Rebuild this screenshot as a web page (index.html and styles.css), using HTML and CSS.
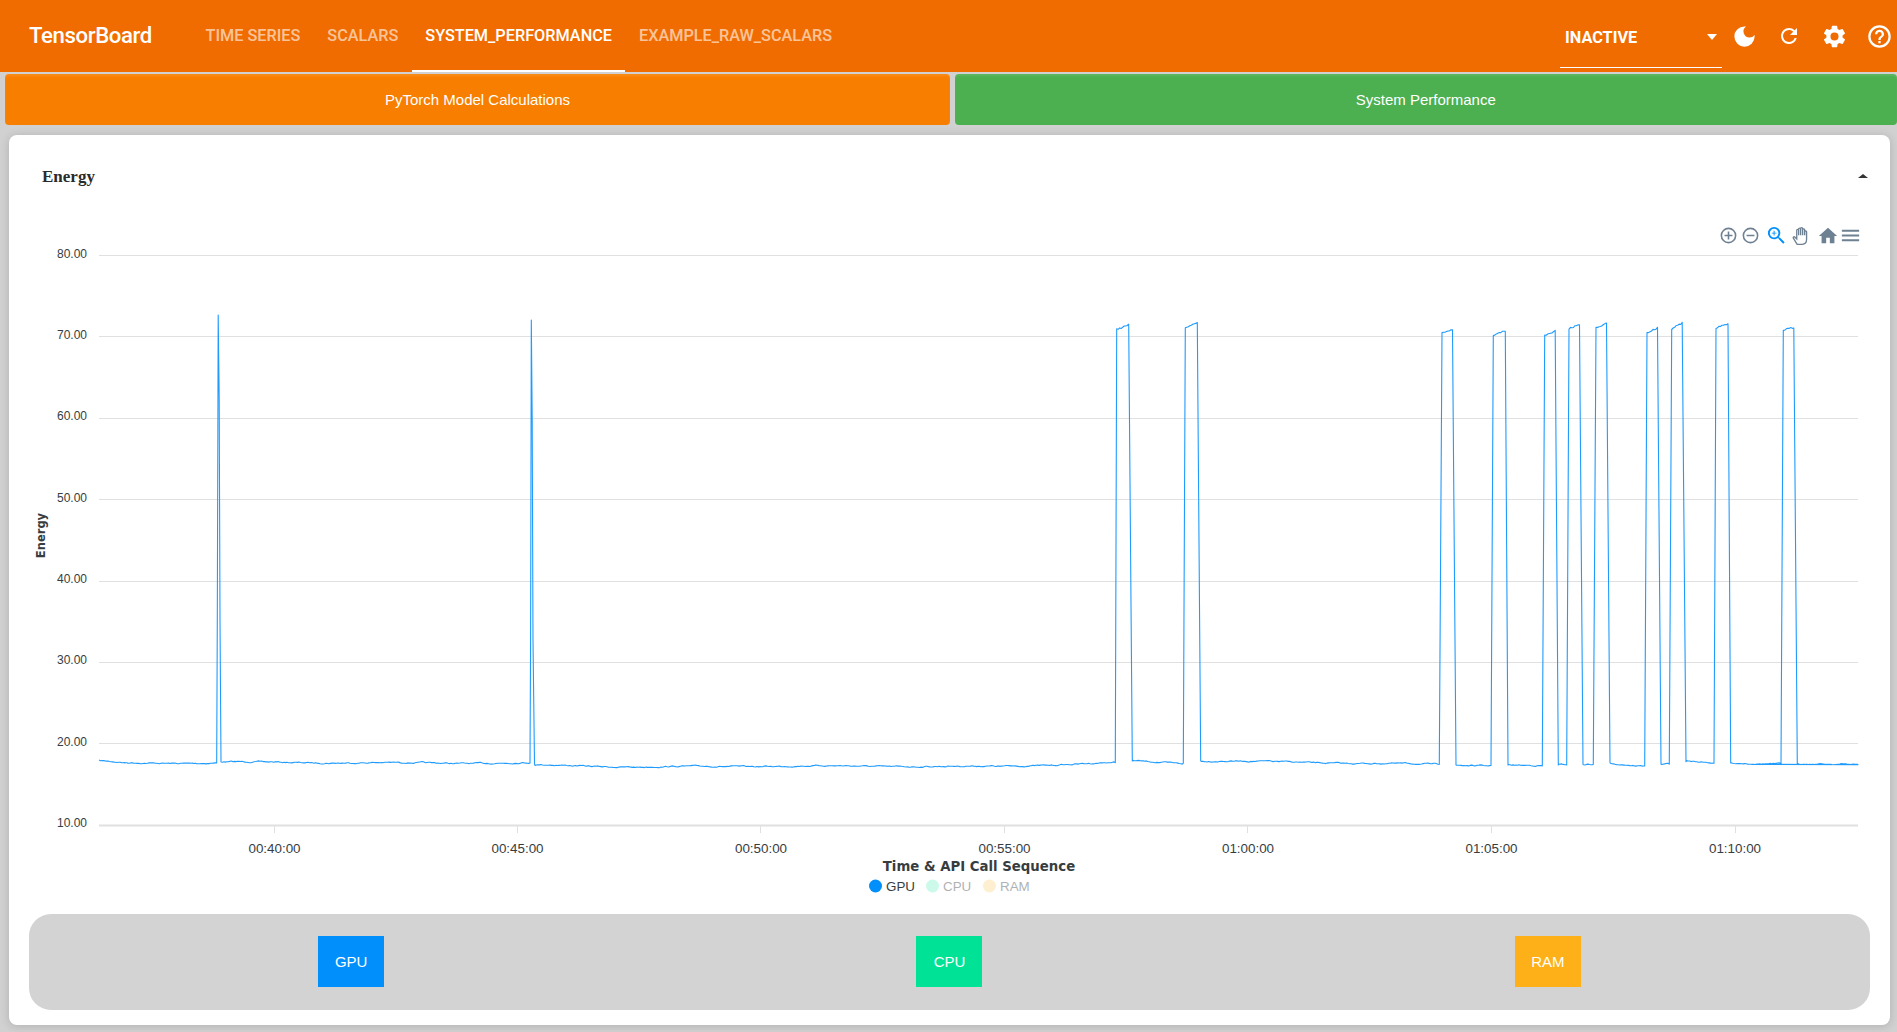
FILE: index.html
```html
<!DOCTYPE html>
<html>
<head>
  <meta charset="utf-8" />
  <title>TensorBoard</title>
  <link rel="stylesheet" href="styles.css">
</head>
<body>
  <header class="topbar">
    <div class="brand">TensorBoard</div>
    <nav class="tabs">
      <a class="tab">Time Series</a>
      <a class="tab">Scalars</a>
      <a class="tab tab-active">System_Performance</a>
      <a class="tab">Example_Raw_Scalars</a>
    </nav>
    <div class="topbar-right">
      <div class="plugin-select">
        <span>Inactive</span>
        <i class="select-arrow"></i>
      </div>
      <button class="icon-btn" aria-label="dark mode">
        <svg viewBox="0 0 24 24" width="27" height="27"><path d="M12 3a9 9 0 1 0 9 9c0-.46-.04-.92-.1-1.36a5.39 5.39 0 0 1-4.4 2.26 5.4 5.4 0 0 1-3.14-9.8c-.44-.06-.9-.1-1.36-.1z"/></svg>
      </button>
      <button class="icon-btn" aria-label="reload">
        <svg viewBox="0 0 24 24" width="24" height="24"><path d="M17.65 6.35A7.96 7.96 0 0 0 12 4a8 8 0 1 0 7.73 10h-2.08A6 6 0 1 1 12 6c1.66 0 3.14.69 4.22 1.78L13 11h7V4l-2.35 2.35z"/></svg>
      </button>
      <button class="icon-btn" aria-label="settings">
        <svg viewBox="0 0 24 24" width="27" height="27"><path d="M19.14 12.94c.04-.3.06-.61.06-.94s-.02-.64-.07-.94l2.03-1.58a.49.49 0 0 0 .12-.61l-1.92-3.32a.49.49 0 0 0-.59-.22l-2.39.96a7 7 0 0 0-1.62-.94l-.36-2.54a.48.48 0 0 0-.48-.41h-3.84a.48.48 0 0 0-.47.41l-.36 2.54c-.59.24-1.13.57-1.62.94l-2.39-.96a.49.49 0 0 0-.59.22L2.73 8.87a.48.48 0 0 0 .12.61l2.03 1.58c-.05.3-.08.63-.08.94s.02.64.07.94l-2.03 1.58a.49.49 0 0 0-.12.61l1.92 3.32c.12.22.37.29.59.22l2.39-.96c.5.38 1.03.7 1.62.94l.36 2.54c.05.24.24.41.48.41h3.84c.24 0 .44-.17.47-.41l.36-2.54c.59-.24 1.13-.56 1.62-.94l2.39.96c.22.08.47 0 .59-.22l1.92-3.32a.48.48 0 0 0-.12-.61l-2.01-1.58zM12 15.6A3.6 3.6 0 1 1 12 8.4a3.6 3.6 0 0 1 0 7.2z"/></svg>
      </button>
      <button class="icon-btn" aria-label="help">
        <svg viewBox="0 0 24 24" width="27" height="27"><path d="M11 18h2v-2h-2v2zm1-16a10 10 0 1 0 0 20 10 10 0 0 0 0-20zm0 18a8 8 0 1 1 0-16 8 8 0 0 1 0 16zm0-14a4 4 0 0 0-4 4h2a2 2 0 1 1 4 0c0 2-3 1.75-3 5h2c0-2.25 3-2.5 3-5a4 4 0 0 0-4-4z"/></svg>
      </button>
    </div>
  </header>

  <div class="section-btns">
    <button class="section-btn section-orange">PyTorch Model Calculations</button>
    <button class="section-btn section-green">System Performance</button>
  </div>

  <main class="card">
    <div class="card-head">
      <h2 class="card-title">Energy</h2>
      <i class="collapse-arrow"></i>
    </div>

    <div class="chart">
      <div class="chart-toolbar">
        <svg class="tool" width="19" height="19" viewBox="0 0 24 24"><path d="M13 7h-2v4H7v2h4v4h2v-4h4v-2h-4V7zm-1-5a10 10 0 1 0 0 20 10 10 0 0 0 0-20zm0 18a8 8 0 1 1 0-16 8 8 0 0 1 0 16z"/></svg>
        <svg class="tool tool-minus" width="19" height="19" viewBox="0 0 24 24"><path d="M7 11v2h10v-2H7zm5-9a10 10 0 1 0 0 20 10 10 0 0 0 0-20zm0 18a8 8 0 1 1 0-16 8 8 0 0 1 0 16z"/></svg>
        <svg class="tool tool-on" width="23" height="23" viewBox="0 0 24 24"><path d="M15.5 14h-.79l-.28-.27A6.47 6.47 0 0 0 16 9.5 6.5 6.5 0 1 0 9.5 16c1.61 0 3.09-.59 4.23-1.57l.27.28v.79l5 4.99L20.49 19l-4.99-5zm-6 0a4.5 4.5 0 1 1 0-9 4.5 4.5 0 0 1 0 9z"/><path d="M12 10h-2v2H9v-2H7V9h2V7h1v2h2v1z"/></svg>
        <svg class="tool tool-hand" width="20" height="20" viewBox="0 0 24 24"><path d="M6.2 22 1.6 14.6c-.7-1.1.7-2.2 1.7-1.3l2.4 2.2V5.2c0-1.5 2.3-1.5 2.3 0V11 3.7c0-1.5 2.4-1.5 2.4 0V11 3c0-1.5 2.4-1.5 2.4 0v8-6.4c0-1.5 2.4-1.5 2.4 0V11 7c0-1.4 2.3-1.4 2.3 0v9c0 3.4-1.9 6-5.3 6H6.2z"/></svg>
        <svg class="tool tool-home" width="22" height="22" viewBox="0 0 24 24"><path d="M10 20v-6h4v6h5v-8h3L12 3 2 12h3v8z"/></svg>
        <svg class="tool" width="23" height="23" viewBox="0 0 24 24"><path d="M3 18h18v-2H3v2zm0-5h18v-2H3v2zm0-7v2h18V6H3z"/></svg>
      </div>

      <!-- viewBox uses page coordinates so numbers read straight off the screenshot -->
      <svg class="plot" width="1881" height="716" viewBox="9 190 1881 716">
        <g class="grid">
          <line x1="99" x2="1858" y1="255.5" y2="255.5"/>
          <line x1="99" x2="1858" y1="336.5" y2="336.5"/>
          <line x1="99" x2="1858" y1="418.5" y2="418.5"/>
          <line x1="99" x2="1858" y1="499.5" y2="499.5"/>
          <line x1="99" x2="1858" y1="581.5" y2="581.5"/>
          <line x1="99" x2="1858" y1="662.5" y2="662.5"/>
          <line x1="99" x2="1858" y1="743.5" y2="743.5"/>
          <line class="axis" x1="99" x2="1858" y1="825.5" y2="825.5"/>
          <line x1="274.5" x2="274.5" y1="826" y2="833"/>
          <line x1="517.5" x2="517.5" y1="826" y2="833"/>
          <line x1="760.5" x2="760.5" y1="826" y2="833"/>
          <line x1="1004.5" x2="1004.5" y1="826" y2="833"/>
          <line x1="1247.5" x2="1247.5" y1="826" y2="833"/>
          <line x1="1491.5" x2="1491.5" y1="826" y2="833"/>
          <line x1="1735.5" x2="1735.5" y1="826" y2="833"/>
        </g>

        <g class="y-labels">
          <text x="87" y="258">80.00</text>
          <text x="87" y="339">70.00</text>
          <text x="87" y="420">60.00</text>
          <text x="87" y="502">50.00</text>
          <text x="87" y="583">40.00</text>
          <text x="87" y="664">30.00</text>
          <text x="87" y="746">20.00</text>
          <text x="87" y="827">10.00</text>
        </g>

        <g class="x-labels">
          <text x="274.5" y="853">00:40:00</text>
          <text x="517.5" y="853">00:45:00</text>
          <text x="761" y="853">00:50:00</text>
          <text x="1004.5" y="853">00:55:00</text>
          <text x="1248" y="853">01:00:00</text>
          <text x="1491.5" y="853">01:05:00</text>
          <text x="1735" y="853">01:10:00</text>
        </g>

        <text class="axis-title" x="979" y="871">Time &amp; API Call Sequence</text>
        <text class="axis-title axis-title-y" transform="translate(45 535.5) rotate(-90)">Energy</text>

        <path id="gpu-line" class="series"/>

        <g class="legend">
          <circle cx="875.5" cy="886" r="6.5" fill="#008ffb"/>
          <text x="886" y="891">GPU</text>
          <circle class="legend-off-dot" cx="932.5" cy="886" r="6.5" fill="#00e396"/>
          <text class="legend-off-text" x="943" y="891">CPU</text>
          <circle class="legend-off-dot" cx="989.5" cy="886" r="6.5" fill="#feb019"/>
          <text class="legend-off-text" x="1000" y="891">RAM</text>
        </g>
      </svg>
    </div>

    <div class="metric-bar">
      <div class="metric-cell"><button class="metric-btn metric-gpu">GPU</button></div>
      <div class="metric-cell"><button class="metric-btn metric-cpu">CPU</button></div>
      <div class="metric-cell"><button class="metric-btn metric-ram">RAM</button></div>
    </div>
  </main>

  <script src="chart.js"></script>
</body>
</html>
```

FILE: styles.css
```css
:root {
  --bar-orange: #f16c00;
  --page-bg: #d1d1d1;
  --text-color: #373d3f;
}
html, body {
  margin: 0;
  height: 100%;
  overflow: hidden;
}
body {
  background-color: var(--page-bg);
  font-family: "Liberation Sans", Arial, sans-serif;
}
button {
  border: none;
  font-family: inherit;
  cursor: pointer;
}

/* top bar */
.topbar {
  display: flex;
  align-items: stretch;
  height: 72px;
  background-color: var(--bar-orange);
  color: #ffffff;
  font-family: Roboto, sans-serif;
}
.brand {
  margin-left: 29px;
  width: 163px;
  font-size: 22.2px;
  font-weight: 500;
  line-height: 71px;
  letter-spacing: -0.4px;
}
.tabs {
  display: flex;
}
.tab {
  padding: 0 13.5px;
  font-size: 16.25px;
  font-weight: 500;
  line-height: 72px;
  height: 70px;
  text-transform: uppercase;
  color: rgba(255, 255, 255, 0.62);
  border-bottom: 2px solid transparent;
}
.tab-active {
  color: #ffffff;
  border-bottom-color: #ffffff;
}
.topbar-right {
  display: flex;
  align-items: center;
  gap: 9px;
  margin-left: auto;
}
.plugin-select {
  display: flex;
  align-items: center;
  justify-content: space-between;
  box-sizing: border-box;
  width: 162px;
  height: 68px;
  margin-right: -5px;
  padding: 7px 5px 0 5px;
  border-bottom: 1px solid #ffffff;
  font-size: 16.3px;
  font-weight: 700;
  text-transform: uppercase;
  align-self: flex-start;
}
.select-arrow {
  width: 0;
  height: 0;
  border-left: 5.5px solid transparent;
  border-right: 5.5px solid transparent;
  border-top: 6px solid #ffffff;
}
.icon-btn {
  display: flex;
  align-items: center;
  justify-content: center;
  width: 36px;
  height: 72px;
  padding: 0;
  background: none;
}
.icon-btn svg {
  fill: #ffffff;
}

/* section switch */
.section-btns {
  display: flex;
  gap: 4.5px;
  padding: 2px 0 0 5px;
}
.section-btn {
  flex: 1;
  height: 51px;
  border-radius: 4px;
  font-size: 15px;
  color: #ffffff;
  box-shadow: inset 0 2px 2px rgba(255, 255, 255, 0.1);
}
.section-orange {
  flex: 0 0 945px;
  background-color: #f87e00;
}
.section-green {
  background-color: #4caf50;
}

/* energy card */
.card {
  box-sizing: border-box;
  height: 890px;
  margin: 10px 7px 0 9px;
  padding: 0 20px 15px;
  background-color: #ffffff;
  border-radius: 8px;
  box-shadow: 0 1px 10px rgba(0, 0, 0, 0.16);
}
.card-head {
  display: flex;
  align-items: center;
  justify-content: space-between;
  box-sizing: border-box;
  height: 82px;
  padding: 2px 2px 0 13px;
}
.card-title {
  margin: 0;
  font-family: "Liberation Serif", "Times New Roman", serif;
  font-size: 17px;
  font-weight: 700;
  color: #2b2b2b;
}
.collapse-arrow {
  width: 0;
  height: 0;
  margin-top: -2px;
  border-left: 5px solid transparent;
  border-right: 5px solid transparent;
  border-bottom: 4px solid #333333;
}

/* chart */
.chart {
  position: relative;
  height: 724px;
  margin: -27px -20px 0;
}
.plot {
  display: block;
}
.chart-toolbar {
  position: absolute;
  top: 34px;
  right: 28px;
  display: flex;
  align-items: center;
  gap: 3px;
}
.tool {
  fill: #6e8192;
}
.tool-minus {
  margin-left: 0.3px;
}
.tool-on {
  fill: #008ffb;
  margin-left: 1.5px;
}
.tool-hand {
  fill: #ffffff;
  stroke: #6e8192;
  stroke-width: 1.6;
  margin-left: 1px;
}
.tool-home {
  margin-left: 2.5px;
  margin-right: -3px;
}
.grid line {
  stroke: #e0e0e0;
  stroke-width: 1;
}
.grid .axis {
  stroke-width: 2;
}
.y-labels text {
  font-size: 12px;
  text-anchor: end;
  fill: var(--text-color);
}
.x-labels text {
  font-size: 13.4px;
  text-anchor: middle;
  fill: var(--text-color);
}
.axis-title {
  font-family: "DejaVu Sans", sans-serif;
  font-size: 13.3px;
  font-weight: 700;
  text-anchor: middle;
  fill: var(--text-color);
}
.axis-title-y {
  font-size: 11.5px;
}
.series {
  fill: none;
  stroke: #1f9bfd;
  stroke-width: 1.1;
  stroke-linejoin: round;
}
.legend text {
  font-size: 13.4px;
  fill: var(--text-color);
}
.legend .legend-off-text {
  opacity: 0.4;
}
.legend-off-dot {
  opacity: 0.2;
}

/* metric buttons */
.metric-bar {
  display: grid;
  grid-template-columns: repeat(3, 1fr);
  box-sizing: border-box;
  height: 96px;
  padding: 22px 23px 0;
  background-color: #d3d3d3;
  border-radius: 22px;
}
.metric-cell {
  display: flex;
  justify-content: center;
}
.metric-btn {
  width: 66px;
  height: 51px;
  padding: 0;
  font-size: 15px;
  color: #ffffff;
}
.metric-gpu {
  background-color: #008ffb;
}
.metric-cpu {
  background-color: #00e396;
}
.metric-ram {
  background-color: #feb019;
}
```

FILE: chart.js
```js
(function () {
  // small seeded wobble so the flat parts look like real samples
  let seed = 7;
  function rnd() {
    seed = (seed * 16807) % 2147483647;
    return seed / 2147483647 - 0.5;
  }

  const pts = [];
  let drift = 0;
  function flat(x0, y0, x1, y1) {
    for (let x = x0; x < x1; x += 1.5) {
      drift = drift * 0.75 + rnd() * 0.9;
      const t = (x - x0) / (x1 - x0);
      // slow swell on top of the jitter
      const swell = Math.sin(x / 23) * 0.45;
      pts.push([x, y0 + (y1 - y0) * t + drift + swell]);
    }
    pts.push([x1, y1]);
  }
  function top(x0, y0, x1, y1) {
    for (let x = x0; x <= x1; x += 1.5) {
      const t = (x - x0) / (x1 - x0);
      pts.push([x, y0 + (y1 - y0) * t + rnd() * 1.6]);
    }
  }

  // baseline stretches and the two thin spikes, read from the picture
  flat(99, 761, 125, 763);
  flat(125, 763, 216.7, 763);
  pts.push([217.3, 620], [218.2, 315], [219.2, 400], [220, 620], [221, 762]);
  flat(221, 762, 400, 763);
  flat(400, 763, 530, 763);
  pts.push([530.6, 640], [531.3, 320], [532.2, 420], [533, 640], [534.5, 764]);
  flat(535, 765, 640, 767);
  flat(640, 767, 780, 766);
  flat(780, 766, 1000, 766.5);
  flat(1000, 766.5, 1115.3, 762.7);

  // wide pulses: top start x, top end x, fall x, top y start, top y end,
  // next base y start, next base y end, next rise x
  const pulses = [
    [1116.7, 1129.3, 1132.3, 329.3, 324.7, 761, 763.3, 1183.3],
    [1185.3, 1197.3, 1200.7, 328.3, 322, 760.7, 764.5, 1439.3],
    [1442, 1453.3, 1456, 332, 330, 765, 765.5, 1491],
    [1493.3, 1505.3, 1508, 335, 331, 765, 766, 1542.3],
    [1544.7, 1556, 1558.3, 335.7, 330.7, 765, 765, 1566.7],
    [1569, 1580.7, 1583, 328.7, 324, 764.5, 764.3, 1593.3],
    [1596, 1607.3, 1610, 328, 323.3, 762.7, 766, 1644.7],
    [1647, 1658.3, 1661, 332.7, 327.7, 764.3, 764.3, 1669.3],
    [1671.7, 1683.3, 1686, 328.7, 322.3, 761.7, 763.3, 1714],
    [1716, 1728.3, 1730.7, 328, 323.7, 763, 763.5, 1781],
    [1783.3, 1794.3, 1797.3, 330, 327.3, 764, 764.8, 1858]
  ];
  pulses.forEach(function (p) {
    top(p[0], p[3], p[1], p[4]);
    pts.push([p[2], p[5]]);
    flat(p[2] + 0.5, p[5], p[7], p[6]);
  });
  // the series doubles back over its tail, which thickens the last stretch
  pts.push([1756, 764.2]);

  let d = '';
  pts.forEach(function (p, i) {
    d += (i ? 'L' : 'M') + p[0].toFixed(1) + ' ' + p[1].toFixed(1);
  });
  document.getElementById('gpu-line').setAttribute('d', d);
})();
```
